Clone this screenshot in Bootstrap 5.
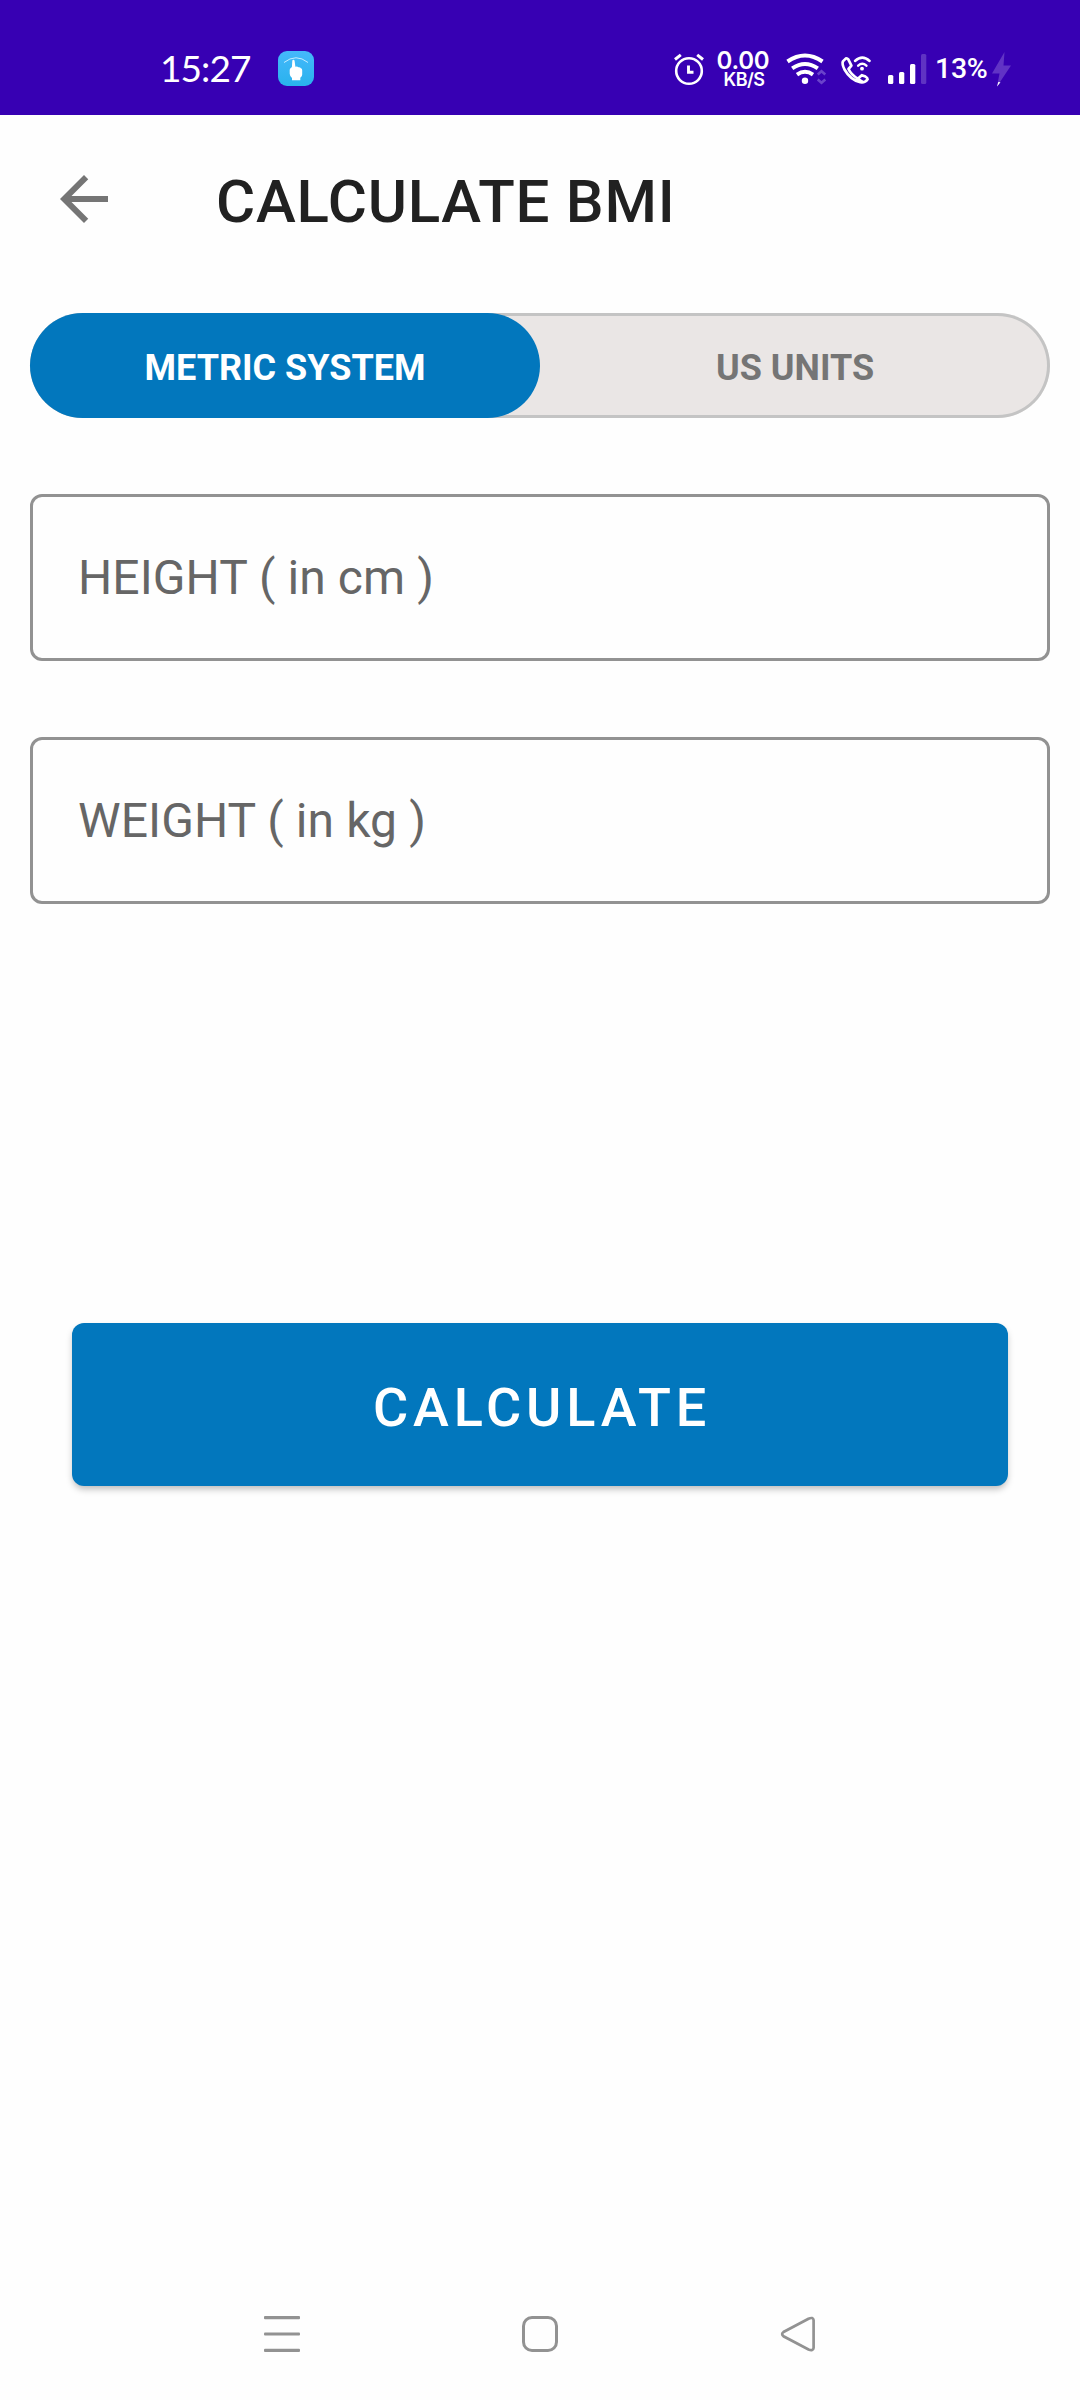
<!DOCTYPE html>
<html lang="en">
<head>
<meta charset="utf-8">
<meta name="viewport" content="width=device-width, initial-scale=1">
<title>Calculate BMI</title>
<link href="https://cdn.jsdelivr.net/npm/bootstrap@5.3.0/dist/css/bootstrap.min.css" rel="stylesheet">
<style>
  body { font-family: Roboto, "Liberation Sans", sans-serif; background: #fefefe; height: 2400px; overflow: hidden; }
  svg { display: block; flex: none; }
  .status-bar { height: 115px; background: #3700b3; padding: 24px 68px 0 160px; font-family: Lato, sans-serif; }
  .status-bar > div { height: 90px; }
  .clock { font-size: 37px; line-height: 88px; height: 90px; letter-spacing: -.9px; width: 93px; }
  .app-tile { margin-left: 25px; }
  .net-speed { width: 54px; margin: 0 14px 0 12px; font-family: Inter, sans-serif; font-weight: 600; text-align: center; }
  .net-speed span { display: block; white-space: nowrap; }
  .speed-value { font-size: 24px; line-height: 20px; padding-top: 2px; margin-left: -2px; letter-spacing: -.2px; }
  .speed-unit { font-size: 18px; line-height: 18px; letter-spacing: -.5px; }
  .signal { margin-left: 14px; }
  .battery { font-family: Roboto, sans-serif; font-size: 28.5px; line-height: 90px; font-weight: 500; width: 53px; margin-left: 8px; letter-spacing: -.3px; white-space: nowrap; }
  .app-bar { height: 168px; padding-left: 60px; }
  .app-title { font-size: 60px; font-weight: 500; line-height: 70px; letter-spacing: .75px; color: #212121; margin: 6px 0 0 108px; }
  .unit-switch { height: 105px; margin: 30px 30px 0; background: #eae6e5; border-radius: 53px; box-shadow: inset 0 0 0 3px #c4c4c4; }
  .unit-switch .btn { border: 0; border-radius: 53px; font-size: 36px; font-weight: 700; color: #757575; padding: 5px 0 0; }
  .unit-switch .btn.active { background: #0277bd; color: #fff; }
  .measure { height: 167px; margin: 0 30px; padding: 0 45px; border: 3px solid #929292; border-radius: 12px; font-size: 48px; letter-spacing: .08px; color: #666; background: transparent; width: auto; }
  .measure::placeholder { color: #666; opacity: 1; }
  .fields { margin-top: 76px; gap: 76px; }
  .calc { margin: 419px 72px 0; height: 163px; border: 0; border-radius: 12px; background: #0277bd; color: #fff; font-size: 54px; font-weight: 500; letter-spacing: 4.82px; padding: 5px 0 0 4px; box-shadow: 0 4px 7px -1px rgba(0,0,0,.27); }
  .sys-nav { height: 132px; padding: 0 264px; }
</style>
</head>
<body class="d-flex flex-column">
<header class="status-bar d-flex justify-content-between text-white">
  <div class="d-flex align-items-center">
    <span class="clock">15:27</span>
    <svg class="app-tile" width="36" height="36" viewBox="0 0 36 36">
      <defs><linearGradient id="tile" x1="0" y1="0" x2="0" y2="1"><stop stop-color="#45b8fb"/><stop offset="1" stop-color="#29b2ed"/></linearGradient></defs>
      <rect width="36" height="35" rx="9" fill="url(#tile)"/>
      <path d="M6 11.500Q18 2 30 11.500" fill="none" stroke="#c5edff" stroke-width="1"/>
      <path d="M14.300 10q0-1.200 1.100-1.200t1.200 1.200l.8 5.700q2-.7 3 .5 2-.2 2.400 1 1.400.2 1.400 2v4.200q0 1.800-1.900 3.400v2.400h-8.300v-2.200q-2.300-2-2.300-4.200v-4q0-1.400 2.200-2.800z" fill="#fff"/>
    </svg>
  </div>
  <div class="d-flex align-items-center">
    <svg width="32" height="34" viewBox="672 52 32 34" fill="none" stroke="#fff" stroke-width="2.600">
      <circle cx="688" cy="71" r="12.800"/><path d="M674 59.500l5.800-4.700M702 59.500l-5.800-4.700" stroke-width="3"/><path d="M687.500 65.500v6.700h5" stroke-width="2.900"/>
    </svg>
    <div class="net-speed"><span class="speed-value">0.00</span><span class="speed-unit">KB/S</span></div>
    <svg width="42" height="34" viewBox="785 52 42 34" fill="none" stroke="#fff" stroke-width="4">
      <path d="M787.500 61.500Q805 49.500 822.500 61.500M792.200 68.300Q805 59.600 817.800 68.300M797 74.600Q805 69 813 74.600"/>
      <circle cx="805" cy="80.800" r="3.200" fill="#fff" stroke="none"/>
      <path d="M817.700 74.500l3.800-3.300 3.800 3.300M817.700 79.500l3.800 3.300 3.800-3.300" stroke="#6a43cb" stroke-width="2.500"/>
    </svg>
    <svg class="ms-2 ps-1" width="38" height="34" viewBox="839 52 34 34" fill="none" stroke="#fff" stroke-width="2.700" stroke-linejoin="round" stroke-linecap="round">
      <path d="M845.700 58.600L842.900 61.400Q841.800 64 844.500 69.500 850.500 80 860.300 82.200 865 83 867.600 79.200 867.600 77.700 865.500 76.600L861.800 75.200 857.800 78.700Q851 74.500 848.500 69L851.400 65.600 848.300 59.400Q847 57.800 845.700 58.600M857.800 78.700L862 81.500"/>
      <path d="M855 61Q862.300 54.300 869.600 61M858.200 65.600Q862.300 62 866.400 65.600" stroke-width="2.500"/>
      <circle cx="862" cy="68.700" r="1.900" fill="#fff" stroke="none"/>
    </svg>
    <svg class="signal" width="40" height="34" viewBox="887 52 40 34" fill="#fff">
      <rect x="888" y="75" width="5.300" height="9" rx="1.500"/><rect x="899" y="72" width="5.300" height="12" rx="1.500"/><rect x="910" y="64" width="5.300" height="20" rx="1.500"/><rect x="921" y="54" width="5.300" height="30" rx="1.500" fill="#5f33c3"/>
    </svg>
    <span class="battery">13%</span>
    <svg width="24" height="36" viewBox="988 51 24 36" fill="#6133c5">
      <path d="M1004.500 52L992 73.500h7.500L997 86.500 1011 65.500h-7.500z"/><path d="M998.300 82l2.200.2-3.500 4.300z" fill="#fff"/>
    </svg>
  </div>
</header>
<nav class="app-bar d-flex align-items-center">
  <svg width="48" height="48" viewBox="4 4 16 16" fill="#757575"><path d="M20 11H7.830l5.590-5.590L12 4l-8 8 8 8 1.410-1.410L7.830 13H20v-2z"/></svg>
  <h1 class="app-title">CALCULATE BMI</h1>
</nav>
<main class="d-flex flex-column flex-grow-1">
  <div class="unit-switch d-flex" role="group" aria-label="Units">
    <button type="button" class="btn active flex-fill w-50">METRIC SYSTEM</button>
    <button type="button" class="btn flex-fill w-50">US UNITS</button>
  </div>
  <div class="fields d-flex flex-column">
    <input class="form-control measure" type="text" placeholder="HEIGHT ( in cm )">
    <input class="form-control measure" type="text" placeholder="WEIGHT ( in kg )">
  </div>
  <button type="button" class="btn calc">CALCULATE</button>
</main>
<footer class="sys-nav d-flex align-items-center justify-content-between">
  <svg width="36" height="36" viewBox="0 0 36 36" fill="#929292"><rect width="36" height="3.200" rx="1"/><rect y="16.400" width="36" height="3.200" rx="1"/><rect y="32.800" width="36" height="3.200" rx="1"/></svg>
  <svg width="36" height="36" viewBox="0 0 36 36" fill="none" stroke="#929292" stroke-width="3"><rect x="1.500" y="1.500" width="33" height="33" rx="8.500"/></svg>
  <svg width="36" height="36" viewBox="0 0 36 36" fill="none" stroke="#929292" stroke-width="2.700"><path d="M28.500 2.700L3.500 16q-2.700 2 0 4.300l25 13.200q4.700 1.900 5.100-1.700V4.200q-.4-3.500-5.100-1.500z"/></svg>
</footer>
<script src="https://cdn.jsdelivr.net/npm/bootstrap@5.3.0/dist/js/bootstrap.bundle.min.js"></script>
</body>
</html>
